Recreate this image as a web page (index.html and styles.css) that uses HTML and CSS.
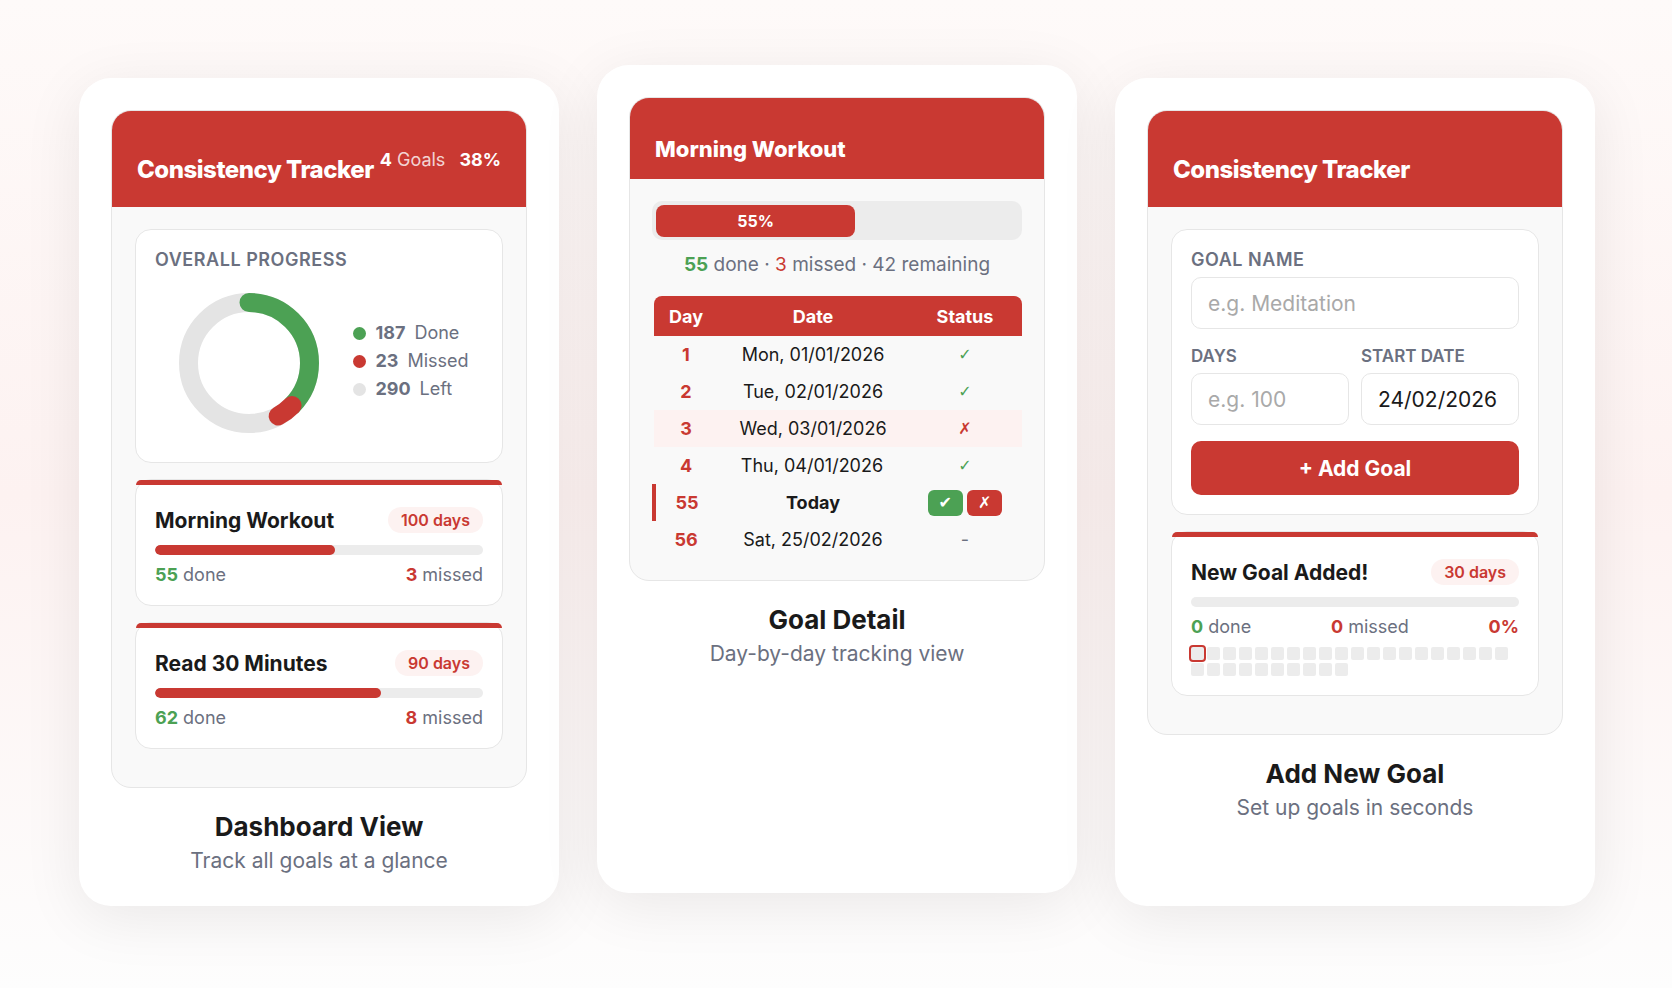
FILE: index.html
```html
<!DOCTYPE html>
<html lang="en">
<head>
    <meta charset="UTF-8">
    <meta name="viewport" content="width=device-width, initial-scale=1.0">
    <title>Consistency Tracker</title>
    <link rel="stylesheet" href="styles.css">
</head>
<body>

<main class="showcase">

    <!-- Dashboard -->
    <section class="shot">
        <div class="screen">
            <header class="screen-header">
                <h2>Consistency Tracker</h2>
                <div class="header-stats">
                    <span><b>4</b> Goals</span>
                    <b>38%</b>
                </div>
            </header>
            <div class="screen-body">
                <div class="card">
                    <h3 class="card-label">Overall Progress</h3>
                    <div class="overview">
                        <svg class="donut" viewBox="0 0 160 160" fill="none" stroke-width="19">
                            <circle cx="80" cy="80" r="60.5" stroke="#e4e4e4"/>
                            <g transform="rotate(-90 80 80)" stroke-linecap="round">
                                <circle cx="80" cy="80" r="60.5" pathLength="500" stroke="#4ca154" stroke-dasharray="187 500"/>
                                <circle cx="80" cy="80" r="60.5" pathLength="500" stroke="#c93932" stroke-dasharray="23 500" stroke-dashoffset="-187"/>
                            </g>
                        </svg>
                        <ul class="legend">
                            <li><i class="dot dot-done"></i><b>187</b> Done</li>
                            <li><i class="dot dot-missed"></i><b>23</b> Missed</li>
                            <li><i class="dot dot-left"></i><b>290</b> Left</li>
                        </ul>
                    </div>
                </div>

                <div class="card goal">
                    <div class="goal-top">
                        <h3>Morning Workout</h3>
                        <span class="badge">100 days</span>
                    </div>
                    <div class="bar"><div class="bar-fill" style="width: 55%"></div></div>
                    <div class="goal-stats">
                        <span><b class="done">55</b> done</span>
                        <span><b class="missed">3</b> missed</span>
                    </div>
                </div>

                <div class="card goal">
                    <div class="goal-top">
                        <h3>Read 30 Minutes</h3>
                        <span class="badge">90 days</span>
                    </div>
                    <div class="bar"><div class="bar-fill" style="width: 69%"></div></div>
                    <div class="goal-stats">
                        <span><b class="done">62</b> done</span>
                        <span><b class="missed">8</b> missed</span>
                    </div>
                </div>
            </div>
        </div>
        <div class="caption">
            <h2>Dashboard View</h2>
            <p>Track all goals at a glance</p>
        </div>
    </section>

    <!-- Goal detail -->
    <section class="shot raised">
        <div class="screen">
            <header class="screen-header compact">
                <h2>Morning Workout</h2>
            </header>
            <div class="screen-body detail">
                <div class="big-bar"><div class="big-bar-fill" style="width: 55%">55%</div></div>
                <p class="summary"><b class="done">55</b> done · <span class="missed">3</span> missed · 42 remaining</p>
                <table class="days">
                    <thead>
                        <tr>
                            <th class="col-day">Day</th>
                            <th>Date</th>
                            <th class="col-status">Status</th>
                        </tr>
                    </thead>
                    <tbody>
                        <tr><td>1</td><td>Mon, 01/01/2026</td><td class="tick done">✓</td></tr>
                        <tr><td>2</td><td>Tue, 02/01/2026</td><td class="tick done">✓</td></tr>
                        <tr class="row-missed"><td>3</td><td>Wed, 03/01/2026</td><td class="tick missed">✗</td></tr>
                        <tr><td>4</td><td>Thu, 04/01/2026</td><td class="tick done">✓</td></tr>
                        <tr class="row-today">
                            <td>55</td>
                            <td>Today</td>
                            <td>
                                <div class="marks">
                                    <button type="button" class="mark mark-done" aria-label="Done">✔</button>
                                    <button type="button" class="mark mark-missed" aria-label="Missed">✗</button>
                                </div>
                            </td>
                        </tr>
                        <tr><td>56</td><td>Sat, 25/02/2026</td><td class="pending">-</td></tr>
                    </tbody>
                </table>
            </div>
        </div>
        <div class="caption">
            <h2>Goal Detail</h2>
            <p>Day-by-day tracking view</p>
        </div>
    </section>

    <!-- Add goal -->
    <section class="shot">
        <div class="screen">
            <header class="screen-header">
                <h2>Consistency Tracker</h2>
            </header>
            <div class="screen-body">
                <form class="card" onsubmit="event.preventDefault();">
                    <div class="field">
                        <label class="card-label" for="goal-name">Goal Name</label>
                        <input type="text" id="goal-name" placeholder="e.g. Meditation">
                    </div>
                    <div class="field-row">
                        <div class="field">
                            <label class="card-label tight" for="goal-days">Days</label>
                            <input type="text" id="goal-days" placeholder="e.g. 100">
                        </div>
                        <div class="field">
                            <label class="card-label tight" for="goal-start">Start Date</label>
                            <input type="text" id="goal-start" value="24/02/2026">
                        </div>
                    </div>
                    <button type="submit" class="add-btn">+ Add Goal</button>
                </form>

                <div class="card goal">
                    <div class="goal-top">
                        <h3>New Goal Added!</h3>
                        <span class="badge">30 days</span>
                    </div>
                    <div class="bar"></div>
                    <div class="goal-stats">
                        <span><b class="done">0</b> done</span>
                        <span><b class="missed">0</b> missed</span>
                        <b class="missed">0%</b>
                    </div>
                    <div class="day-grid">
                        <i class="today"></i><i></i><i></i><i></i><i></i><i></i><i></i><i></i><i></i><i></i>
                        <i></i><i></i><i></i><i></i><i></i><i></i><i></i><i></i><i></i><i></i>
                        <i></i><i></i><i></i><i></i><i></i><i></i><i></i><i></i><i></i><i></i>
                    </div>
                </div>
            </div>
        </div>
        <div class="caption">
            <h2>Add New Goal</h2>
            <p>Set up goals in seconds</p>
        </div>
    </section>

</main>

</body>
</html>
```
FILE: styles.css
```css
* {
    box-sizing: border-box;
    margin: 0;
    padding: 0;
}
:root {
    --red: #c93932;
    --red-light: #fdf2f1;
    --green: #4ca154;
    --gray: #6b7080;
    --line: #e6e6e6;
    --track: #ececec;
    --text: #1a1a1a;
}
body {
    font-family: Inter, "Liberation Sans", sans-serif;
    color: var(--text);
    background: linear-gradient(180deg, #fefaf9 0%, #fdf2f1 50%, #fdfdfd 100%);
    min-height: 100vh;
}
.showcase {
    display: grid;
    grid-template-columns: repeat(3, 1fr);
    gap: 38px;
    padding: 78px 77px 84px 79px;
}
.shot {
    background: #ffffff;
    border-radius: 32px;
    padding: 32px;
    box-shadow: 0 12px 60px rgba(0, 0, 0, 0.08);
}
.raised {
    margin: -13px 0 13px;
}

/* mock screen */
.screen {
    background: #f9f9f9;
    border: 1px solid var(--line);
    border-radius: 20px;
    overflow: hidden;
}
.screen-header {
    display: flex;
    justify-content: space-between;
    align-items: center;
    background: var(--red);
    color: #ffffff;
    padding: 22px 25px;
}
.screen-header h2 {
    font-size: 24px;
    font-weight: 800;
    line-height: 30px;
    letter-spacing: -0.02em;
    margin-top: 22px;
    white-space: nowrap;
}
.screen-header.compact {
    padding: 16px 25px;
}
.screen-header.compact h2 {
    font-size: 22px;
    line-height: 27px;
    letter-spacing: 0;
}
.header-stats {
    display: flex;
    gap: 14px;
    font-size: 18px;
    white-space: nowrap;
}
.header-stats span {
    color: rgba(255, 255, 255, 0.8);
}
.header-stats b {
    color: #ffffff;
}
.screen-body {
    padding: 22px 23px;
}

/* cards */
.card {
    position: relative;
    background: #ffffff;
    border: 1px solid var(--line);
    border-radius: 16px;
    padding: 19px;
    margin-bottom: 16px;
}
.card-label {
    display: block;
    font-size: 18px;
    font-weight: 600;
    line-height: 22px;
    letter-spacing: 0.03em;
    text-transform: uppercase;
    color: var(--gray);
}
.card-label.tight {
    font-size: 17px;
    letter-spacing: 0;
}
.overview {
    display: flex;
    justify-content: center;
    align-items: center;
    gap: 24px;
    margin-top: 12px;
}
.donut {
    width: 160px;
    height: 160px;
}
.legend {
    list-style: none;
    font-size: 18px;
    line-height: 24px;
    color: var(--gray);
}
.legend li {
    display: flex;
    align-items: center;
    gap: 9px;
    margin-bottom: 4px;
}
.dot {
    width: 13px;
    height: 13px;
    border-radius: 50%;
}
.dot-done {
    background: var(--green);
}
.dot-missed {
    background: var(--red);
}
.dot-left {
    background: #e4e4e4;
}

.goal {
    padding-top: 26px;
}
.goal::before {
    content: "";
    position: absolute;
    top: 0;
    left: 0;
    right: 0;
    height: 5px;
    background: var(--red);
    border-radius: 5px 5px 0 0;
}
.goal-top {
    display: flex;
    justify-content: space-between;
    align-items: center;
    height: 28px;
    margin-bottom: 11px;
}
.goal-top h3 {
    font-size: 21px;
    font-weight: 700;
}
.badge {
    background: var(--red-light);
    color: var(--red);
    font-size: 16px;
    font-weight: 600;
    line-height: 26px;
    padding: 0 13px;
    border-radius: 13px;
}
.bar {
    height: 10px;
    background: var(--track);
    border-radius: 5px;
    overflow: hidden;
}
.bar-fill {
    height: 100%;
    background: var(--red);
    border-radius: 5px;
}
.goal-stats {
    display: flex;
    justify-content: space-between;
    font-size: 18px;
    line-height: 22px;
    margin-top: 9px;
    color: var(--gray);
}
.done {
    color: var(--green);
}
.missed {
    color: var(--red);
}
.pending {
    color: var(--gray);
}
.day-grid {
    display: flex;
    flex-wrap: wrap;
    gap: 3px;
    margin-top: 9px;
}
.day-grid i {
    width: 13px;
    height: 13px;
    background: var(--track);
    border-radius: 2px;
}
.day-grid .today {
    outline: 2px solid var(--red);
}

/* goal detail */
.detail {
    padding: 22px;
}
.big-bar {
    height: 39px;
    padding: 4px;
    background: var(--track);
    border-radius: 10px;
}
.big-bar-fill {
    height: 32px;
    background: var(--red);
    color: #ffffff;
    font-size: 16px;
    font-weight: 700;
    line-height: 32px;
    text-align: center;
    border-radius: 8px;
}
.summary {
    font-size: 19px;
    line-height: 24px;
    text-align: center;
    color: var(--gray);
    margin: 13px 0 19px;
}
.days {
    width: 100%;
    border-collapse: collapse;
    table-layout: fixed;
    font-size: 18px;
    text-align: center;
}
.col-day {
    width: 64px;
}
.col-status {
    width: 114px;
}
.days th {
    height: 40px;
    background: var(--red);
    color: #ffffff;
    font-weight: 700;
}
.days th:first-child {
    border-top-left-radius: 8px;
}
.days th:last-child {
    border-top-right-radius: 8px;
}
.days td {
    height: 37px;
}
.days td:first-child {
    color: var(--red);
    font-weight: 700;
}
.row-missed {
    background: var(--red-light);
}
.row-today {
    font-weight: 700;
}
.row-today td:first-child {
    border-left: 4px solid var(--red);
}
.tick {
    font-family: "DejaVu Sans", sans-serif;
    font-size: 16px;
    font-weight: 700;
    line-height: 20px;
}
.marks {
    display: flex;
    justify-content: center;
    gap: 4px;
}
.mark {
    height: 26px;
    padding: 0 11px;
    border: none;
    border-radius: 6px;
    color: #ffffff;
    font-family: "DejaVu Sans", sans-serif;
    font-size: 16px;
    font-weight: 700;
    cursor: pointer;
}
.mark-done {
    background: var(--green);
}
.mark-missed {
    background: var(--red);
}

/* add goal form */
.field input {
    width: 100%;
    height: 52px;
    margin: 6px 0 16px;
    padding: 0 16px;
    border: 1px solid var(--line);
    border-radius: 10px;
    background: #ffffff;
    color: var(--text);
    font-family: inherit;
    font-size: 21px;
}
.field input::placeholder {
    color: #a9a9a9;
}
.field-row {
    display: grid;
    grid-template-columns: 1fr 1fr;
    gap: 12px;
}
.add-btn {
    display: block;
    width: 100%;
    height: 54px;
    background: var(--red);
    color: #ffffff;
    border: none;
    border-radius: 10px;
    font-family: inherit;
    font-size: 21px;
    font-weight: 700;
    cursor: pointer;
}

.caption {
    text-align: center;
    margin-top: 23px;
}
.caption h2 {
    font-size: 26px;
    font-weight: 700;
    line-height: 31px;
    margin-bottom: 6px;
}
.caption p {
    font-size: 21px;
    line-height: 26px;
    color: var(--gray);
}
```
